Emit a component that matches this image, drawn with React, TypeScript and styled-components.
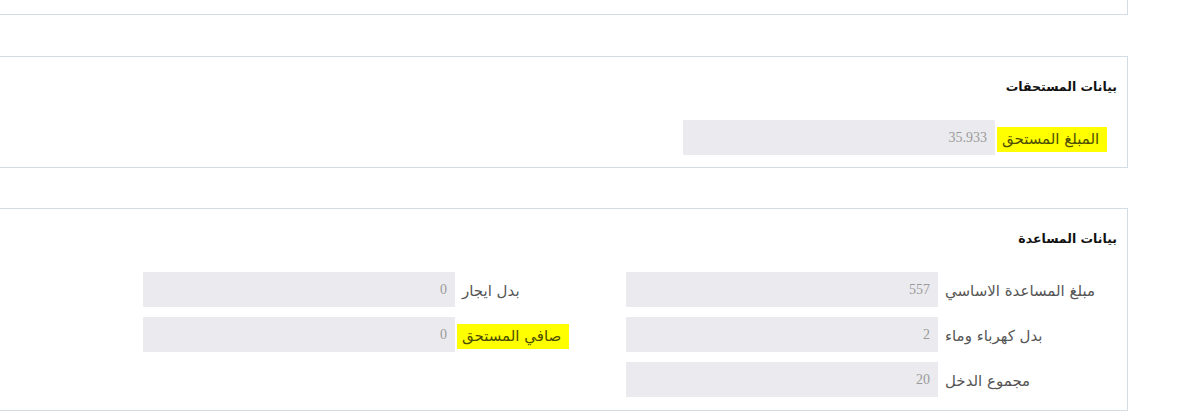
import styled, { createGlobalStyle } from 'styled-components';

const GlobalStyle = createGlobalStyle`
  html, body {
    margin: 0;
    padding: 0;
    background: #ffffff;
  }
`;

const Page = styled.div`
  width: 1180px;
  height: 411px;
  overflow: hidden;
  font-family: "DejaVu Sans", "Noto Sans", sans-serif;
`;

const Panel = styled.section<{ $stub?: boolean }>`
  direction: rtl;
  width: 1128px;
  box-sizing: border-box;
  border: 1px solid #d3dbe4;
  border-left: none;
  border-top: ${(p) => (p.$stub ? 'none' : '1px solid #d3dbe4')};
  height: ${(p) => (p.$stub ? '15px' : 'auto')};
  padding: ${(p) => (p.$stub ? '0' : '0 10px 12px 0')};
  margin-bottom: 41px;

  & + & + & {
    margin-top: -1px;
    padding-bottom: 13px;
  }
`;

const PanelHeading = styled.h4`
  margin: 23px 0 0;
  font-size: 12.5px;
  line-height: 14px;
  font-weight: bold;
  color: #111;
  text-align: right;
`;

const FieldGrid = styled.div<{ $columns: string }>`
  display: grid;
  grid-template-columns: ${(p) => p.$columns};
  row-gap: 10px;
  margin-top: 26px;
`;

const FieldRow = styled.div`
  display: flex;
  align-items: center;
  gap: 7px;
`;

const FieldLabel = styled.label<{ $width: number }>`
  width: ${(p) => p.$width}px;
  flex-shrink: 0;
  text-align: left;
  font-size: 15px;
  color: #555;
  line-height: 22px;
  padding-top: 3px;
  white-space: nowrap;
`;

const Highlight = styled.span`
  background: #ffff00;
  color: #4d4d00;
  padding: 3px 8px 4px 5px;
  margin-left: -5px;
`;

const ValueBox = styled.div`
  width: 312px;
  height: 35px;
  box-sizing: border-box;
  background: #ebeaee;
  padding: 0 8px;
  display: flex;
  align-items: center;
  font-family: "Liberation Serif", serif;
  font-size: 14px;
  color: #9a9a9a;
`;

type Field = { label: string; value: string; width: number; marked?: boolean };

function FieldItem({ label, value, width, marked }: Field) {
  return (
    <FieldRow>
      <FieldLabel $width={width}>{marked ? <Highlight>{label}</Highlight> : label}</FieldLabel>
      <ValueBox>{value}</ValueBox>
    </FieldRow>
  );
}

const aidFields: Field[] = [
  { label: 'مبلغ المساعدة الاساسي', value: '557', width: 172 },
  { label: 'بدل ايجار', value: '0', width: 164 },
  { label: 'بدل كهرباء وماء', value: '2', width: 172 },
  { label: 'صافي المستحق', value: '0', width: 164, marked: true },
  { label: 'مجموع الدخل', value: '20', width: 172 },
];

export default function App() {
  return (
    <Page>
      <GlobalStyle />
      <Panel $stub />

      <Panel>
        <PanelHeading>بيانات المستحقات</PanelHeading>
        <FieldGrid $columns="434px">
          <FieldItem label="المبلغ المستحق" value="35.933" width={115} marked />
        </FieldGrid>
      </Panel>

      <Panel>
        <PanelHeading>بيانات المساعدة</PanelHeading>
        <FieldGrid $columns="491px 483px">
          {aidFields.map((f, i) => (
            <FieldItem key={i} {...f} />
          ))}
        </FieldGrid>
      </Panel>
    </Page>
  );
}
